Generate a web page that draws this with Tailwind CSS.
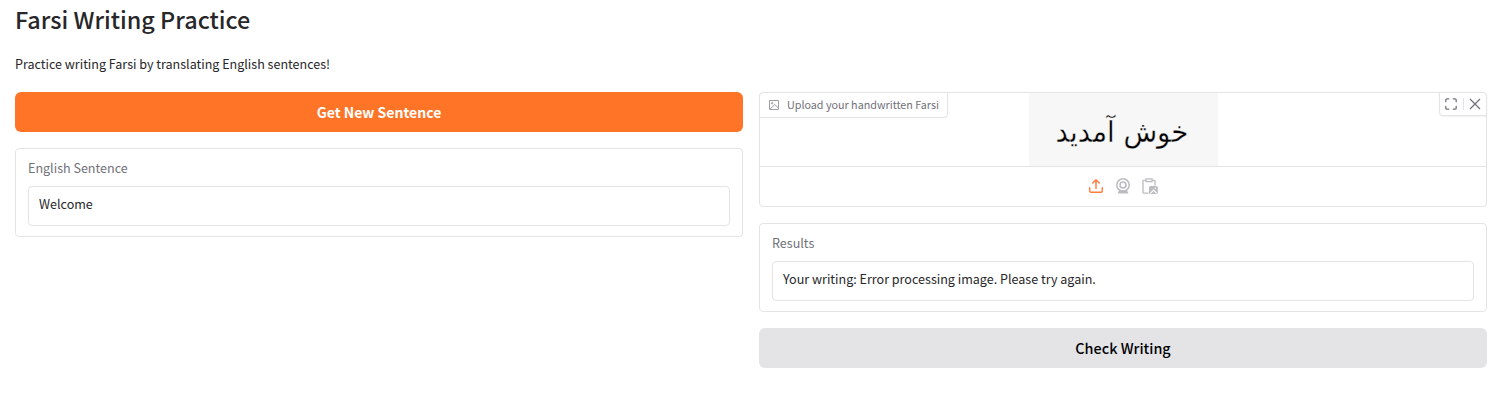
<!DOCTYPE html>
<html lang="en">
<head>
<meta charset="utf-8">
<title>Farsi Writing Practice</title>
<script src="https://cdn.jsdelivr.net/npm/@tailwindcss/browser@4"></script>
</head>
<body class="bg-white text-[#27272a] font-['Source_Sans_Pro','Noto_Sans_CJK_SC',sans-serif] h-[417px] overflow-hidden">
<main class="pl-[15px] pr-[14px]">
  <h1 class="h-10 text-[23.42px] leading-[38px] font-medium whitespace-nowrap"><span>Farsi Writing Practice</span></h1>
  <p class="mt-[13px] h-[21px] text-[12.54px] leading-[21px]"><span>Practice writing Farsi by translating English sentences!</span></p>
  <div class="mt-[18px] grid grid-cols-2 gap-4 items-start">
    <section class="flex flex-col gap-4">
      <button class="h-10 rounded-md bg-[#ff7426] text-white text-[14px] leading-10 font-bold"><span>Get New Sentence</span></button>
      <div class="h-[89px] rounded border border-[#e4e4e7] px-3 pt-2">
        <div class="h-[21px] mb-2 text-[12.55px] leading-[21px] text-[#71717a]"><span>English Sentence</span></div>
        <div class="h-10 rounded border border-[#e4e4e7] px-[10px] pt-[6px] text-[12.55px] leading-[21px]"><span>Welcome</span></div>
      </div>
    </section>
    <section class="flex flex-col gap-4">
      <div class="relative h-[115px] rounded border border-[#e4e4e7]">
        <div class="h-[73px] flex justify-center">
          <div class="w-[189px] ml-px pr-[3px] bg-[#f7f7f7] text-center text-black text-[27.6px] leading-[75px] font-['DejaVu_Sans',sans-serif] [-webkit-text-stroke:0.3px_#f7f7f7]" dir="rtl" lang="fa"><span class="inline-block translate-y-[1.5px] scale-y-105">خوش آمدید</span></div>
        </div>
        <div class="h-10 border-t border-[#e4e4e7] pb-0.5 flex items-center justify-center gap-[11px] text-[#bbbbc2]">
          <svg class="size-4 text-[#ff8040]" viewBox="0 0 16 16" fill="none" stroke="currentColor" stroke-width="1.5" stroke-linecap="round" stroke-linejoin="round"><path d="M8 10.5V1.8M4.7 5 8 1.7 11.3 5M1.7 9.8v3.2a1.2 1.2 0 0 0 1.2 1.2h10.2a1.2 1.2 0 0 0 1.2-1.2V9.8"/></svg>
          <svg class="size-4" viewBox="0 0 16 16" fill="none" stroke="currentColor"><circle cx="8" cy="7" r="6.2" stroke-width="1.5"/><circle cx="8" cy="7" r="3" stroke-width="1.6"/><path d="M4.5 12.5h7l1.5 2.6H3z" fill="currentColor" stroke-width=".8" stroke-linejoin="round"/></svg>
          <svg class="size-4" viewBox="0 0 16 16" fill="none" stroke="currentColor" stroke-width="1.3"><path d="M6.5 15.2H1.8a.8.8 0 0 1-.8-.8V3.1a.8.8 0 0 1 .8-.8H4m6 0h2.2a.8.8 0 0 1 .8.8v4.4M4 .9h6v2.8H4z"/><rect x="7" y="8" width="8.8" height="8" rx="1.6" fill="currentColor" stroke="none"/><path d="m8.4 15.4 3.2-3.3 3.2 3.2" stroke="#fff" stroke-width="1.1"/><circle cx="13.4" cy="10.2" r=".8" fill="#fff" stroke="none"/></svg>
        </div>
        <div class="absolute -left-px -top-px h-[26px] w-[189px] flex items-center rounded-tl rounded-br border border-[#e4e4e7] bg-white pl-[9px] text-[#71717a] text-[10.75px] leading-4">
          <svg class="size-[10px] mr-2 -mt-px opacity-85" viewBox="0 0 10 10" fill="none" stroke="currentColor" stroke-width=".8"><rect x=".5" y=".5" width="9" height="9" rx=".3"/><circle cx="3.1" cy="3.2" r=".7"/><path d="m1 9 4.8-4.4L9.2 7.8"/></svg>
          <span class="whitespace-nowrap">Upload your handwritten Farsi</span>
        </div>
        <div class="absolute -right-px -top-px h-6 w-12 flex items-center rounded-tr rounded-bl border border-[#e4e4e7] bg-white pl-[5px] text-[#71717a] shadow-xs">
          <svg class="size-3" viewBox="0 0 12 12" fill="none" stroke="currentColor" stroke-width="1.3" stroke-linecap="round"><path d="M.8 3.7V2A1.2 1.2 0 0 1 2 .8h1.7M8.3.8H10A1.2 1.2 0 0 1 11.2 2v1.7M11.2 8.3V10a1.2 1.2 0 0 1-1.2 1.2H8.3M3.7 11.2H2A1.2 1.2 0 0 1 .8 10V8.3"/></svg>
          <div class="ml-1.5 h-3 w-px bg-[#e4e4e7]"></div>
          <svg class="ml-[5px] size-3" viewBox="0 0 12 12" fill="none" stroke="currentColor" stroke-width="1.3"><path d="m1 1 10 10M11 1 1 11"/></svg>
        </div>
      </div>
      <div class="h-[89px] rounded border border-[#e4e4e7] px-3 pt-2">
        <div class="h-[21px] mb-2 text-[12.55px] leading-[21px] text-[#71717a]"><span>Results</span></div>
        <div class="h-10 rounded border border-[#e4e4e7] px-[10px] pt-[6px] text-[12.55px] leading-[21px]"><span>Your writing: Error processing image. Please try again.</span></div>
      </div>
      <button class="h-10 rounded-md bg-[#e4e4e7] text-black text-[14.4px] leading-10 font-medium"><span>Check Writing</span></button>
    </section>
  </div>
</main>
</body>
</html>
